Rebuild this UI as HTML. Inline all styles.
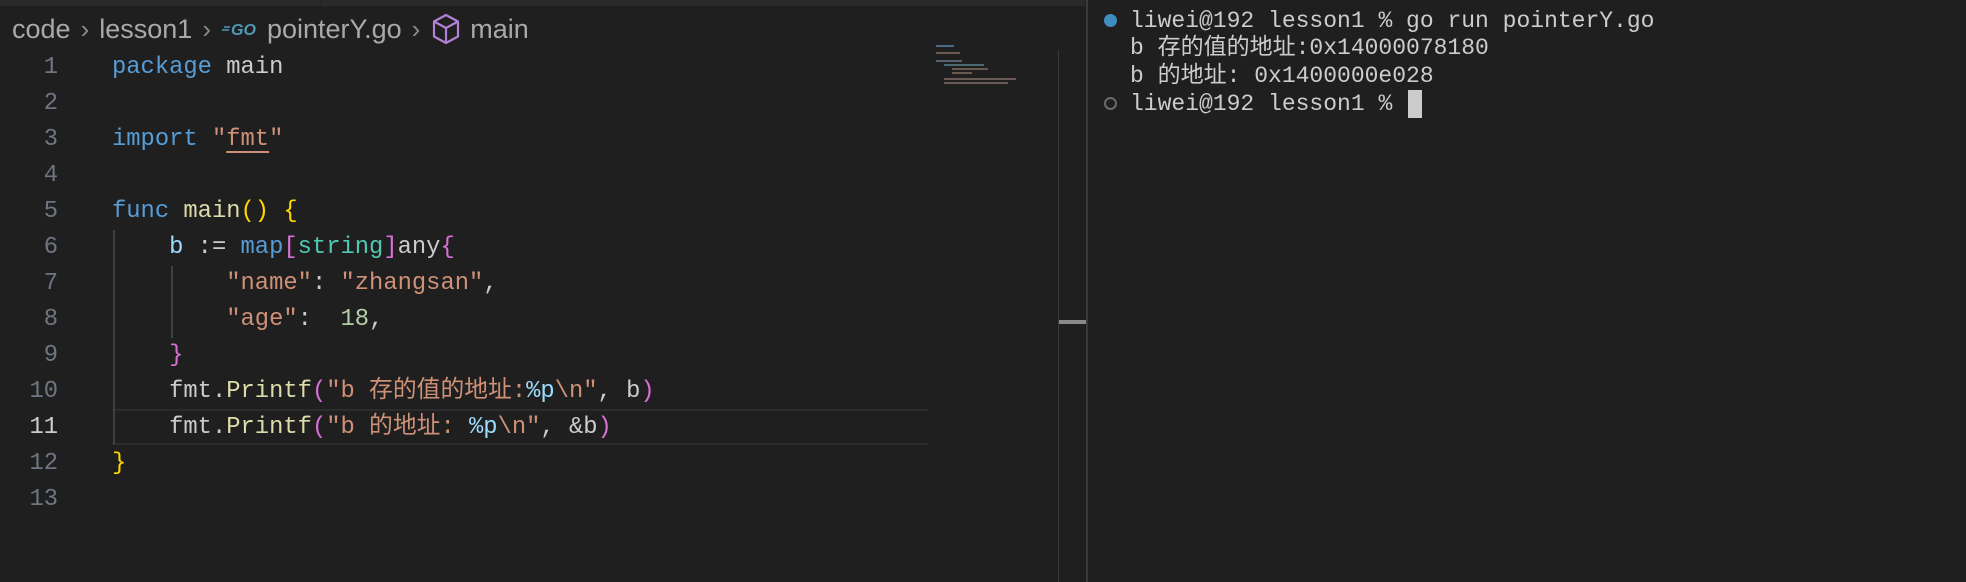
<!DOCTYPE html>
<html><head><meta charset="utf-8"><style>
*{margin:0;padding:0;box-sizing:border-box}
body{width:1966px;height:582px;background:#1f1f1f;overflow:hidden;position:relative;font-family:"Liberation Mono","Noto Sans CJK SC",monospace}
.abs{position:absolute}
.topstrip{left:0;top:0;width:1085px;height:6px;background:#2a2a2a}
.bc{top:11px;left:12px;font-family:"Liberation Sans","Noto Sans CJK SC",sans-serif;font-size:27px;color:#a9a9a9;white-space:nowrap;height:36px;display:flex;align-items:center}
.bc .sep{color:#8a8a8a;margin:0 10px;font-size:26px}
.ln{left:0;width:58px;text-align:right;font-size:23.8px;color:#6e7681;height:36px;line-height:36px}
.code{left:112px;font-size:23.8px;color:#cccccc;white-space:pre;height:36px;line-height:36px;letter-spacing:0}
.k{color:#569cd6}.f{color:#dcdcaa}.s{color:#ce9178}.n{color:#b5cea8}.t{color:#4ec9b0}.v{color:#9cdcfe}.y{color:#ffd700}.p{color:#da70d6}
.term{left:1130px;font-size:23px;color:#cccccc;white-space:pre;height:28px;line-height:28px}
</style></head><body>
<div class="abs topstrip"></div>
<div class="abs" style="left:321px;top:0;width:1px;height:6px;background:#1f1f1f"></div>

<div class="abs bc">code<span class="sep">&#x203A;</span>lesson1<span class="sep">&#x203A;</span><svg width="40" height="22" viewBox="0 0 40 22" style="margin:0 5px 0 1px">
<line x1="2" y1="9" x2="8" y2="9" stroke="#519aba" stroke-width="1.5"/><line x1="0" y1="12" x2="7" y2="12" stroke="#519aba" stroke-width="1.5"/>
<text x="9" y="17" font-family="Liberation Sans" font-weight="bold" font-style="italic" font-size="16" fill="#519aba">GO</text></svg>pointerY.go<span class="sep">&#x203A;</span><svg width="30" height="32" viewBox="0 0 30 32" fill="none" stroke="#b180d7" stroke-width="2.2" stroke-linejoin="round" style="margin:0 9px 0 1px">
<path d="M15 2 L27 8.5 V23.5 L15 30 L3 23.5 V8.5 Z"/><path d="M3 8.5 L15 15 L27 8.5 M15 15 V30"/></svg>main</div>

<!-- current line border -->
<div class="abs" style="left:112px;top:409px;width:816px;height:2px;background:#2c2c2c"></div>
<div class="abs" style="left:112px;top:443px;width:816px;height:2px;background:#2c2c2c"></div>
<!-- indent guides -->
<div class="abs" style="left:113px;top:230px;width:1.5px;height:214px;background:#404040"></div>
<div class="abs" style="left:171px;top:266px;width:1.5px;height:72px;background:#404040"></div>

<div class="abs ln" style="top:50px">1</div>
<div class="abs ln" style="top:86px">2</div>
<div class="abs ln" style="top:122px">3</div>
<div class="abs ln" style="top:158px">4</div>
<div class="abs ln" style="top:194px">5</div>
<div class="abs ln" style="top:230px">6</div>
<div class="abs ln" style="top:266px">7</div>
<div class="abs ln" style="top:302px">8</div>
<div class="abs ln" style="top:338px">9</div>
<div class="abs ln" style="top:374px">10</div>
<div class="abs ln" style="top:410px;color:#cccccc">11</div>
<div class="abs ln" style="top:446px">12</div>
<div class="abs ln" style="top:482px">13</div>

<div class="abs code" style="top:50px"><span class="k">package</span> main</div>
<div class="abs code" style="top:122px"><span class="k">import</span> <span class="s">"<span style="text-decoration:underline;text-underline-offset:6px">fmt</span>"</span></div>
<div class="abs code" style="top:194px"><span class="k">func</span> <span class="f">main</span><span class="y">()</span> <span class="y">{</span></div>
<div class="abs code" style="top:230px">    <span class="v">b</span> := <span class="k">map</span><span class="p">[</span><span class="t">string</span><span class="p">]</span>any<span class="p">{</span></div>
<div class="abs code" style="top:266px">        <span class="s">"name"</span>: <span class="s">"zhangsan"</span>,</div>
<div class="abs code" style="top:302px">        <span class="s">"age"</span>:  <span class="n">18</span>,</div>
<div class="abs code" style="top:338px">    <span class="p">}</span></div>
<div class="abs code" style="top:374px">    fmt.<span class="f">Printf</span><span class="p">(</span><span class="s">"b 存的值的地址:</span><span class="v">%p</span><span class="s">\n"</span>, b<span class="p">)</span></div>
<div class="abs code" style="top:410px">    fmt.<span class="f">Printf</span><span class="p">(</span><span class="s">"b 的地址: </span><span class="v">%p</span><span class="s">\n"</span>, &amp;b<span class="p">)</span></div>
<div class="abs code" style="top:446px"><span class="y">}</span></div>

<!-- minimap -->
<div class="abs" style="left:936px;top:45px;width:18px;height:2px;background:#4a6a8a"></div>
<div class="abs" style="left:936px;top:52px;width:24px;height:2px;background:#6a5a50"></div>
<div class="abs" style="left:936px;top:60px;width:26px;height:2px;background:#556070"></div>
<div class="abs" style="left:944px;top:64px;width:40px;height:2px;background:#4a6a70"></div>
<div class="abs" style="left:952px;top:68px;width:36px;height:2px;background:#6a5a50"></div>
<div class="abs" style="left:952px;top:72px;width:20px;height:2px;background:#6a5a50"></div>
<div class="abs" style="left:944px;top:78px;width:72px;height:2px;background:#6a5a55"></div>
<div class="abs" style="left:944px;top:82px;width:64px;height:2px;background:#6a5a55"></div>
<!-- scrollbar -->
<div class="abs" style="left:1058px;top:50px;width:1px;height:532px;background:#3a3a3a"></div>
<div class="abs" style="left:1059px;top:320px;width:27px;height:4px;background:#8a8a8a"></div>
<div class="abs" style="left:1086px;top:0;width:2px;height:582px;background:#3a3a3a"></div>

<!-- terminal -->
<div class="abs" style="left:1104px;top:14px;width:13px;height:13px;border-radius:50%;background:#3f8dbf"></div>
<div class="abs term" style="top:7px">liwei@192 lesson1 % go run pointerY.go</div>
<div class="abs term" style="top:34px">b 存的值的地址:0x14000078180</div>
<div class="abs term" style="top:62px">b 的地址: 0x1400000e028</div>
<div class="abs" style="left:1104px;top:97px;width:13px;height:13px;border-radius:50%;border:2px solid #6a6a6a"></div>
<div class="abs term" style="top:90px">liwei@192 lesson1 %</div>
<div class="abs" style="left:1408px;top:90px;width:14px;height:28px;background:#cccccc"></div>
</body></html>
